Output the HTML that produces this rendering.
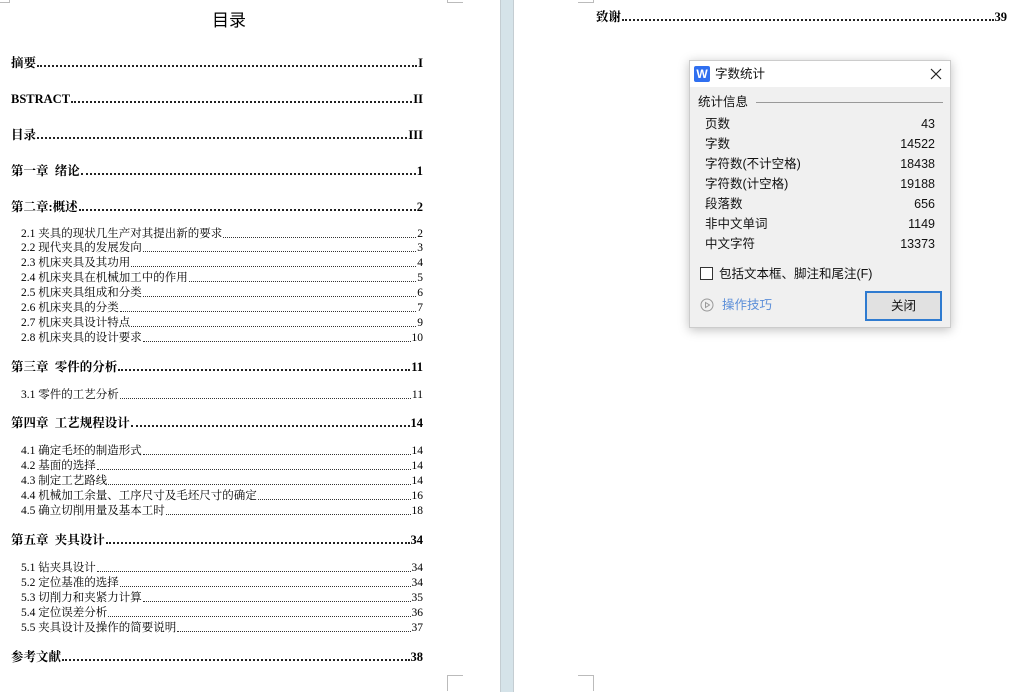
<!DOCTYPE html>
<html><head><meta charset="utf-8"><style>
*{margin:0;padding:0;box-sizing:border-box}
body{width:1014px;height:692px;overflow:hidden;background:#fff;position:relative;font-family:"Liberation Serif","Noto Serif CJK SC","Noto Sans CJK SC",serif;color:#000}
.gap{position:absolute;left:500px;top:0;width:14px;height:692px;background:#d5e3e9;border-left:1px solid #c4cdd2;border-right:1px solid #c4cdd2}
.e{position:absolute;display:flex;align-items:flex-end;height:16px;line-height:16px;white-space:nowrap}
.e .f{flex:1;border-bottom:2px dotted #222;margin:0 1px 4px}
.b{font-weight:bold;font-size:12.5px}
.s{font-size:11.5px;height:14px;line-height:14px}
.s .f{border-bottom:1px dotted #333;margin-bottom:3px}
.c{position:absolute;border-color:#bbb;border-style:solid;width:16px;height:16px}
.dlg{position:absolute;left:689px;top:60px;width:262px;height:268px;background:#f0f0f0;border:1px solid #ccc;box-shadow:0 2px 10px rgba(0,0,0,.25);font-family:"Liberation Sans","Noto Sans CJK SC",sans-serif;font-size:12.5px;color:#111}
.dlg div{line-height:18px}
.tb{height:26px;background:#fff;position:relative}
.row{position:absolute;left:15px;width:230px;display:flex;justify-content:space-between;align-items:center;height:18px;line-height:18px}
</style></head><body>
<div class="gap"></div>
<div class="c" style="left:447px;top:-13px;border-width:0 0 1px 1px"></div>
<div class="c" style="left:-6px;top:-13px;border-width:0 1px 1px 0"></div>
<div class="c" style="left:447px;top:675px;border-width:1px 0 0 1px"></div>
<div class="c" style="left:578px;top:675px;border-width:1px 1px 0 0"></div>
<div class="c" style="left:578px;top:-13px;border-width:0 1px 1px 0"></div>
<div style="position:absolute;left:0;top:6px;width:458px;text-align:center;font-size:17px;font-family:'Liberation Sans','Noto Sans CJK SC',sans-serif">目录</div>

<div class="e b" style="left:11px;top:55px;width:412px"><span>摘要</span><span class="f"></span><span>I</span></div>
<div class="e b" style="left:11px;top:91px;width:412px"><span>BSTRACT</span><span class="f"></span><span>II</span></div>
<div class="e b" style="left:11px;top:127px;width:412px"><span>目录</span><span class="f"></span><span>III</span></div>
<div class="e b" style="left:11px;top:163px;width:412px"><span>第一章&nbsp; 绪论</span><span class="f"></span><span>1</span></div>
<div class="e b" style="left:11px;top:199px;width:412px"><span>第二章:概述</span><span class="f"></span><span>2</span></div>
<div class="e s" style="left:21px;top:227px;width:402px"><span>2.1 夹具的现状几生产对其提出新的要求</span><span class="f"></span><span>2</span></div>
<div class="e s" style="left:21px;top:241px;width:402px"><span>2.2 现代夹具的发展发向</span><span class="f"></span><span>3</span></div>
<div class="e s" style="left:21px;top:256px;width:402px"><span>2.3 机床夹具及其功用</span><span class="f"></span><span>4</span></div>
<div class="e s" style="left:21px;top:271px;width:402px"><span>2.4 机床夹具在机械加工中的作用</span><span class="f"></span><span>5</span></div>
<div class="e s" style="left:21px;top:286px;width:402px"><span>2.5 机床夹具组成和分类</span><span class="f"></span><span>6</span></div>
<div class="e s" style="left:21px;top:301px;width:402px"><span>2.6 机床夹具的分类</span><span class="f"></span><span>7</span></div>
<div class="e s" style="left:21px;top:316px;width:402px"><span>2.7 机床夹具设计特点</span><span class="f"></span><span>9</span></div>
<div class="e s" style="left:21px;top:331px;width:402px"><span>2.8 机床夹具的设计要求</span><span class="f"></span><span>10</span></div>
<div class="e b" style="left:11px;top:359px;width:412px"><span>第三章&nbsp; 零件的分析</span><span class="f"></span><span>11</span></div>
<div class="e s" style="left:21px;top:388px;width:402px"><span>3.1 零件的工艺分析</span><span class="f"></span><span>11</span></div>
<div class="e b" style="left:11px;top:415px;width:412px"><span>第四章&nbsp; 工艺规程设计</span><span class="f"></span><span>14</span></div>
<div class="e s" style="left:21px;top:444px;width:402px"><span>4.1 确定毛坯的制造形式</span><span class="f"></span><span>14</span></div>
<div class="e s" style="left:21px;top:459px;width:402px"><span>4.2 基面的选择</span><span class="f"></span><span>14</span></div>
<div class="e s" style="left:21px;top:474px;width:402px"><span>4.3 制定工艺路线</span><span class="f"></span><span>14</span></div>
<div class="e s" style="left:21px;top:489px;width:402px"><span>4.4 机械加工余量、工序尺寸及毛坯尺寸的确定</span><span class="f"></span><span>16</span></div>
<div class="e s" style="left:21px;top:504px;width:402px"><span>4.5 确立切削用量及基本工时</span><span class="f"></span><span>18</span></div>
<div class="e b" style="left:11px;top:532px;width:412px"><span>第五章&nbsp; 夹具设计</span><span class="f"></span><span>34</span></div>
<div class="e s" style="left:21px;top:561px;width:402px"><span>5.1 钻夹具设计</span><span class="f"></span><span>34</span></div>
<div class="e s" style="left:21px;top:576px;width:402px"><span>5.2 定位基准的选择</span><span class="f"></span><span>34</span></div>
<div class="e s" style="left:21px;top:591px;width:402px"><span>5.3 切削力和夹紧力计算</span><span class="f"></span><span>35</span></div>
<div class="e s" style="left:21px;top:606px;width:402px"><span>5.4 定位误差分析</span><span class="f"></span><span>36</span></div>
<div class="e s" style="left:21px;top:621px;width:402px"><span>5.5 夹具设计及操作的简要说明</span><span class="f"></span><span>37</span></div>
<div class="e b" style="left:11px;top:649px;width:412px"><span>参考文献</span><span class="f"></span><span>38</span></div>
<div class="e b" style="left:596px;top:9px;width:411px"><span>致谢</span><span class="f"></span><span>39</span></div>

<div class="dlg">
 <div class="tb">
  <div style="position:absolute;left:4px;top:5px;width:16px;height:16px;background:#2f6ff0;border-radius:2px;color:#fff;font-weight:bold;font-size:12px;text-align:center;line-height:16px">W</div>
  <div style="position:absolute;left:25px;top:4px">字数统计</div>
  <svg style="position:absolute;left:240px;top:7px" width="12" height="12"><path d="M1 1L11 11M11 1L1 11" stroke="#222" stroke-width="1.2"/></svg>
 </div>
 <div style="position:absolute;left:8px;top:32px">统计信息</div>
 <div style="position:absolute;left:66px;top:41px;width:187px;height:1px;background:#999"></div>
 <div class="row" style="top:54px"><span>页数</span><span>43</span></div>
 <div class="row" style="top:74px"><span>字数</span><span>14522</span></div>
 <div class="row" style="top:94px"><span>字符数(不计空格)</span><span>18438</span></div>
 <div class="row" style="top:114px"><span>字符数(计空格)</span><span>19188</span></div>
 <div class="row" style="top:134px"><span>段落数</span><span>656</span></div>
 <div class="row" style="top:154px"><span>非中文单词</span><span>1149</span></div>
 <div class="row" style="top:174px"><span>中文字符</span><span>13373</span></div>
 <div style="position:absolute;left:10px;top:206px;width:13px;height:13px;border:1px solid #333;background:#fff"></div>
 <div style="position:absolute;left:29px;top:204px">包括文本框、脚注和尾注(F)</div>
 <svg style="position:absolute;left:10px;top:237px" width="14" height="14"><circle cx="7" cy="7" r="6" fill="none" stroke="#999"/><path d="M5.5 4.5L9.5 7L5.5 9.5Z" fill="none" stroke="#999"/></svg>
 <div style="position:absolute;left:32px;top:235px;color:#5b8ed8">操作技巧</div>
 <div style="position:absolute;left:175px;top:230px;width:77px;height:30px;border:2px solid #2f7bd0;background:#e1e1e1;text-align:center;line-height:26px">关闭</div>
</div>
</body></html>
